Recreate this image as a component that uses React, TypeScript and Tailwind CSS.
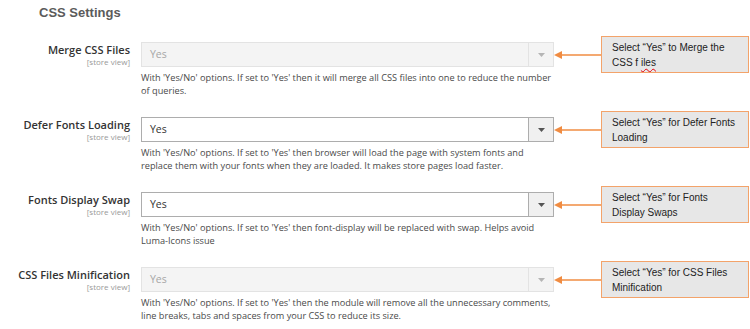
const rows = [
  {
    label: "Merge CSS Files",
    disabled: true,
    help: [
      "With 'Yes/No' options. If set to 'Yes' then it will merge all CSS files into one to reduce the number",
      "of queries.",
    ],
    note: "merge",
  },
  {
    label: "Defer Fonts Loading",
    disabled: false,
    help: [
      "With 'Yes/No' options. If set to 'Yes' then browser will load the page with system fonts and",
      "replace them with your fonts when they are loaded. It makes store pages load faster.",
    ],
    note: "defer",
  },
  {
    label: "Fonts Display Swap",
    disabled: false,
    help: [
      "With 'Yes/No' options. If set to 'Yes' then font-display will be replaced with swap. Helps avoid",
      "Luma-Icons issue",
    ],
    note: "swap",
  },
  {
    label: "CSS Files Minification",
    disabled: true,
    help: [
      "With 'Yes/No' options. If set to 'Yes' then the module will remove all the unnecessary comments,",
      "line breaks, tabs and spaces from your CSS to reduce its size.",
    ],
    note: "minify",
  },
];

const Note = ({ kind }: { kind: string }) => {
  if (kind === "merge")
    return (
      <>
        Select “Yes” to Merge the
        <br />
        CSS f{" "}
        <span className="underline decoration-wavy decoration-red-600 decoration-1 underline-offset-2">
          iles
        </span>
      </>
    );
  if (kind === "defer")
    return (
      <>
        Select “Yes” for Defer Fonts
        <br />
        Loading
      </>
    );
  if (kind === "swap")
    return (
      <>
        Select “Yes” for Fonts
        <br />
        Display Swaps
      </>
    );
  return (
    <>
      Select “Yes” for CSS Files
      <br />
      Minification
    </>
  );
};

const Arrow = () => (
  <svg width="47" height="10" viewBox="0 0 47 10" className="shrink-0">
    <line x1="6" y1="5" x2="47" y2="5" stroke="#f08c42" strokeWidth="1.5" />
    <polygon points="0,5 8,1 8,9" fill="#f08c42" />
  </svg>
);

export default function App() {
  return (
    <div className="w-[750px] h-[329px] overflow-hidden bg-white font-['Open_Sans',sans-serif]">
      <h2 className="pl-[39px] pt-[4px] font-['Liberation_Sans',Arial,sans-serif] text-[13px] font-bold leading-[18px] text-[#5b5b5b]">
        CSS Settings
      </h2>
      <div className="mt-[20px] flex flex-col gap-[20px]">
        {rows.map((r) => (
          <div key={r.label} className="flex items-start">
            <div className="w-[130px] shrink-0 text-right">
              <div className="text-[11px] font-semibold leading-[15px] text-[#333]">{r.label}</div>
              <div className="text-[8px] leading-[10px] text-[#999]">[store view]</div>
            </div>
            <div className="ml-[11px] w-[413px] shrink-0">
              <div
                className={
                  r.disabled
                    ? "flex h-[25px] border border-[#e3e3e3] bg-[#f4f4f4]"
                    : "flex h-[25px] border border-[#adadad] bg-white"
                }
              >
                <div
                  className={
                    r.disabled
                      ? "flex flex-1 items-center pl-[8px] text-[10.5px] text-[#a6a6a6]"
                      : "flex flex-1 items-center pl-[8px] text-[10.5px] text-[#333]"
                  }
                >
                  Yes
                </div>
                <div
                  className={
                    r.disabled
                      ? "flex w-[25px] items-center justify-center border-l border-[#e3e3e3]"
                      : "flex w-[25px] items-center justify-center border-l border-[#adadad] bg-[#f0f0f0]"
                  }
                >
                  <svg width="7" height="4" viewBox="0 0 7 4">
                    <polygon points="0,0 7,0 3.5,4" fill={r.disabled ? "#b5b5b5" : "#555"} />
                  </svg>
                </div>
              </div>
              <div className="mt-[4px] whitespace-nowrap text-[9.2px] leading-[13px] text-[#4a4a4a]">
                {r.help[0]}
                <br />
                {r.help[1]}
              </div>
            </div>
            <div className="flex h-[25px] items-center">
              <Arrow />
              <div className="-my-[6px] flex h-[37px] w-[148px] shrink-0 items-center border-[1.5px] border-[#f3a36a] bg-[#e7e7e7] pl-[10px] font-['Liberation_Sans',Arial,sans-serif] text-[10px] leading-[15px] text-[#222]">
                <div>
                  <Note kind={r.note} />
                </div>
              </div>
            </div>
          </div>
        ))}
      </div>
    </div>
  );
}
